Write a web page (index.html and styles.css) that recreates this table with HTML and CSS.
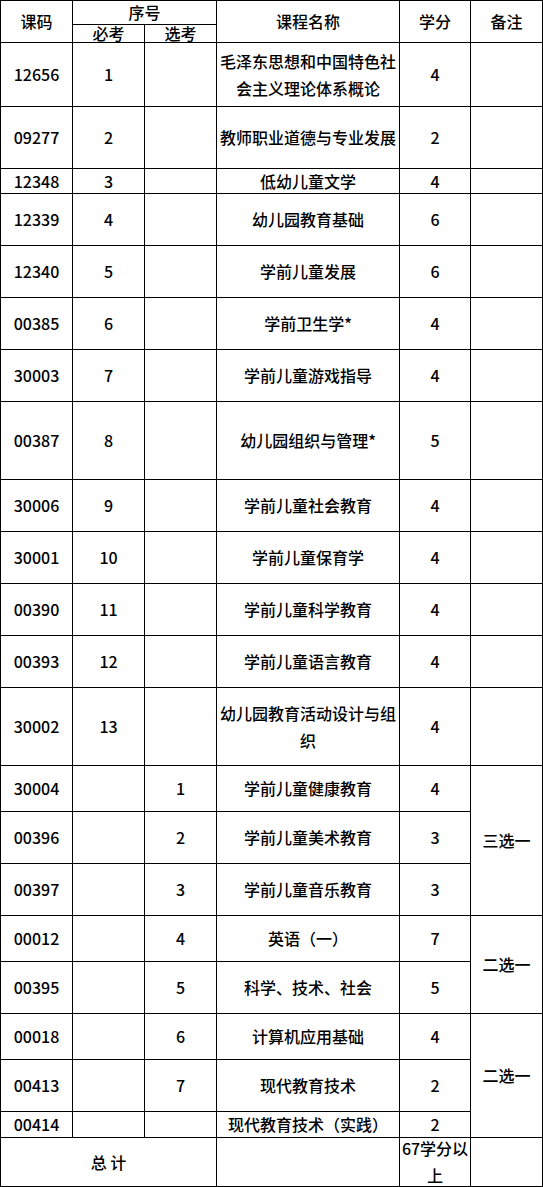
FILE: index.html
```html
<!DOCTYPE html>
<html lang="zh-CN">
<head>
<meta charset="utf-8">
<title>课程表</title>
<link rel="stylesheet" href="styles.css">
</head>
<body>
<div class="sheet">
  <div class="c rs2">课码</div>
  <div class="c cs2">序号</div>
  <div class="c rs2">课程名称</div>
  <div class="c rs2">学分</div>
  <div class="c rs2">备注</div>
  <div class="c">必考</div>
  <div class="c">选考</div>

  <div class="c">12656</div><div class="c">1</div><div class="c"></div><div class="c name">毛泽东思想和中国特色社会主义理论体系概论</div><div class="c">4</div><div class="c"></div>
  <div class="c">09277</div><div class="c">2</div><div class="c"></div><div class="c name">教师职业道德与专业发展</div><div class="c">2</div><div class="c"></div>
  <div class="c">12348</div><div class="c">3</div><div class="c"></div><div class="c name">低幼儿童文学</div><div class="c">4</div><div class="c"></div>
  <div class="c">12339</div><div class="c">4</div><div class="c"></div><div class="c name">幼儿园教育基础</div><div class="c">6</div><div class="c"></div>
  <div class="c">12340</div><div class="c">5</div><div class="c"></div><div class="c name">学前儿童发展</div><div class="c">6</div><div class="c"></div>
  <div class="c">00385</div><div class="c">6</div><div class="c"></div><div class="c name">学前卫生学*</div><div class="c">4</div><div class="c"></div>
  <div class="c">30003</div><div class="c">7</div><div class="c"></div><div class="c name">学前儿童游戏指导</div><div class="c">4</div><div class="c"></div>
  <div class="c">00387</div><div class="c">8</div><div class="c"></div><div class="c name">幼儿园组织与管理*</div><div class="c">5</div><div class="c"></div>
  <div class="c">30006</div><div class="c">9</div><div class="c"></div><div class="c name">学前儿童社会教育</div><div class="c">4</div><div class="c"></div>
  <div class="c">30001</div><div class="c">10</div><div class="c"></div><div class="c name">学前儿童保育学</div><div class="c">4</div><div class="c"></div>
  <div class="c">00390</div><div class="c">11</div><div class="c"></div><div class="c name">学前儿童科学教育</div><div class="c">4</div><div class="c"></div>
  <div class="c">00393</div><div class="c">12</div><div class="c"></div><div class="c name">学前儿童语言教育</div><div class="c">4</div><div class="c"></div>
  <div class="c">30002</div><div class="c">13</div><div class="c"></div><div class="c name">幼儿园教育活动设计与组织</div><div class="c">4</div><div class="c"></div>

  <div class="c">30004</div><div class="c"></div><div class="c">1</div><div class="c name">学前儿童健康教育</div><div class="c">4</div><div class="c rs3">三选一</div>
  <div class="c">00396</div><div class="c"></div><div class="c">2</div><div class="c name">学前儿童美术教育</div><div class="c">3</div>
  <div class="c">00397</div><div class="c"></div><div class="c">3</div><div class="c name">学前儿童音乐教育</div><div class="c">3</div>

  <div class="c">00012</div><div class="c"></div><div class="c">4</div><div class="c name">英语（一）</div><div class="c">7</div><div class="c rs2">二选一</div>
  <div class="c">00395</div><div class="c"></div><div class="c">5</div><div class="c name">科学、技术、社会</div><div class="c">5</div>

  <div class="c">00018</div><div class="c"></div><div class="c">6</div><div class="c name">计算机应用基础</div><div class="c">4</div><div class="c rs3">二选一</div>
  <div class="c">00413</div><div class="c"></div><div class="c">7</div><div class="c name">现代教育技术</div><div class="c">2</div>
  <div class="c">00414</div><div class="c"></div><div class="c"></div><div class="c name">现代教育技术（实践）</div><div class="c">2</div>

  <div class="c cs3">总 计</div><div class="c"></div><div class="c total"><span class="tight">67学分以上</span></div><div class="c"></div>
</div>
</body>
</html>
```

FILE: styles.css
```css
html, body {
  margin: 0;
  padding: 0;
  background: #ffffff;
}

body {
  font-family: "Noto Sans CJK SC", "Noto Sans", sans-serif;
  font-size: 16px;
  font-weight: 500;
  color: #000000;
}

.sheet {
  display: grid;
  width: 543px;
  box-sizing: border-box;
  border-top: 1px solid #000;
  border-left: 1px solid #000;
  grid-template-columns: 72px 72px 72px 183px 71px 72px;
  grid-template-rows:
    24px 18px
    64px 62px 25px
    52px 52px 52px 52px
    78px
    52px 52px 52px 52px
    78px
    46px 52px 52px
    46px 52px
    46px 52px 26px
    49px;
}

.c {
  box-sizing: border-box;
  border-right: 1px solid #000;
  border-bottom: 1px solid #000;
  display: flex;
  align-items: center;
  justify-content: center;
  text-align: center;
  line-height: 17px;
  padding: 0 2px;
  min-width: 0;
  min-height: 0;
}

.name {
  line-height: 27px;
  padding: 0 3px;
}

.total {
  padding: 0;
}

.tight {
  line-height: 27px;
}

.rs2 { grid-row: span 2; }
.rs3 { grid-row: span 3; }
.cs2 { grid-column: span 2; }
.cs3 { grid-column: span 3; }
```
